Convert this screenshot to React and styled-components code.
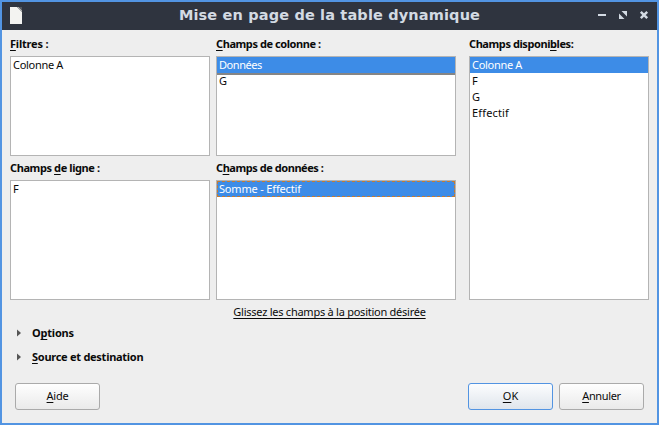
import React from "react";
import styled, { createGlobalStyle } from "styled-components";

const GlobalStyle = createGlobalStyle`
  *, *::before, *::after { box-sizing: border-box; }
  body { margin: 0; background: #eeeeee; }
`;

const Window = styled.div`
  width: 659px;
  height: 425px;
  border: 2px solid #5294e2;
  background: #eeeeee;
  color: #0a0a0a;
  font: 11px/16px "Noto Sans", "Open Sans", sans-serif;
  display: flex;
  flex-direction: column;
  overflow: hidden;
  white-space: nowrap;
`;

const TitleBar = styled.header`
  height: 28px;
  flex: none;
  display: grid;
  grid-template-columns: 60px 1fr 60px;
  align-items: center;
  background: #2f343f;
  color: #d3dae3;
`;

const DocumentIcon = styled.svg`
  display: block;
  margin-left: 7px;
`;

const Title = styled.h1`
  margin: 0;
  padding-bottom: 1px;
  text-align: center;
  font: bold 14.5px/25px "DejaVu Sans", sans-serif;
  letter-spacing: 0.15px;
`;

const WindowControls = styled.svg`
  display: block;
`;

const Fields = styled.main`
  display: grid;
  grid-template-columns: 200px 240px 180px;
  grid-template-rows: 126px 144px;
  column-gap: 6px;
  padding-left: 8px;
`;

const Field = styled.section`
  display: flex;
  flex-direction: column;
  ${(p) => p.$tall && "grid-column: 3; grid-row: 1 / 3; margin-left: 7px; width: 180px;"}
`;

const Label = styled.label`
  height: ${(p) => (p.$lower ? 24 : 26)}px;
  padding-top: ${(p) => (p.$lower ? 4 : 6)}px;
  font-weight: bold;
`;

const Text = styled.span`
  letter-spacing: ${(p) => p.$spacing || 0}px;
`;

const Key = styled.u`
  text-decoration: underline 1px;
  text-underline-offset: 2px;
  text-decoration-skip-ink: none;
`;

const List = styled.ul`
  flex: 1;
  margin: 0;
  padding: 0;
  list-style: none;
  border: 1px solid #b4b4b4;
  background: #fff;
`;

const Row = styled.li`
  height: 16px;
  padding-left: 2px;
  ${(p) => p.$selected && "background: #3d8ce7; color: #fff;"}
  ${(p) => p.$ruled && "height: 18px; border-bottom: 2px solid #858585; margin-bottom: -2px;"}
  ${(p) => p.$focused && "outline: 1px dashed #c47b32; outline-offset: -1px;"}
`;

const Hint = styled.p`
  margin: 4px 0 0;
  height: 17px;
  width: 655px;
  text-align: center;
`;

const HintText = styled(Text)`
  text-decoration: underline 1px;
  text-underline-offset: 2px;
  text-decoration-skip-ink: none;
`;

const Expander = styled.div`
  display: flex;
  align-items: center;
  height: 24px;
  padding-left: 15px;
  font-weight: bold;
`;

const Arrow = styled.svg`
  width: 4px;
  height: 8px;
  margin-right: 11px;
`;

const Actions = styled.footer`
  display: flex;
  gap: 6px;
  padding: 14px 13px 0;
`;

const Button = styled.button`
  width: 85px;
  height: 27px;
  padding: 0 0 1px;
  border: 1px solid ${(p) => (p.$primary ? "#5294e2" : "#aaaaaa")};
  border-radius: 3px;
  background: linear-gradient(${(p) => (p.$primary ? "#fcfdfe, #dfe5ec" : "#fefefe, #eaeaea")});
  color: inherit;
  font: inherit;
  margin-right: ${(p) => (p.$leading ? "auto" : "0")};
`;

const expanders = [
  { id: "options", spacing: -0.2, label: <>O<Key>p</Key>tions</> },
  { id: "source", spacing: -0.27, label: <><Key>S</Key>ource et destination</> },
];

export default function App() {
  return (
    <>
      <GlobalStyle />
      <Window>
        <TitleBar>
          <DocumentIcon width="14" height="18" viewBox="0 0 14 18">
            <path d="M1 0h8l4 4v13H1z" fill="#f3f3f1" />
            <path d="M8 0h5v5z" fill="#55585e" />
            <path d="M9 0l4 4" stroke="#a9aaac" strokeWidth="1" />
          </DocumentIcon>
          <Title>Mise en page de la table dynamique</Title>
          <WindowControls width="60" height="28" viewBox="0 0 60 28">
            <path d="M1 12h8v2H1z" fill="#d3dae3" />
            <path d="M24.5 9H30v5.5zM22 11.5V17h5.5z" fill="#d3dae3" />
            <path d="M43.8 9.8l6.4 6.4m0-6.4l-6.4 6.4" stroke="#d3dae3" strokeWidth="2.4" />
          </WindowControls>
        </TitleBar>
        <Fields>
          <Field>
            <Label><Text $spacing={-0.2}><Key>F</Key>iltres :</Text></Label>
            <List><Row><Text $spacing={-0.3}>Colonne A</Text></Row></List>
          </Field>
          <Field>
            <Label><Text $spacing={-0.42}><Key>C</Key>hamps de colonne :</Text></Label>
            <List>
              <Row $selected $ruled><Text $spacing={-0.45}>Données</Text></Row>
              <Row>G</Row>
            </List>
          </Field>
          <Field $tall>
            <Label><Text $spacing={-0.42}>Champs disponi<Key>b</Key>les:</Text></Label>
            <List>
              <Row $selected><Text $spacing={-0.3}>Colonne A</Text></Row>
              <Row>F</Row>
              <Row>G</Row>
              <Row><Text $spacing={0.15}>Effectif</Text></Row>
            </List>
          </Field>
          <Field>
            <Label $lower><Text $spacing={-0.4}>Champs <Key>d</Key>e ligne :</Text></Label>
            <List><Row>F</Row></List>
          </Field>
          <Field>
            <Label $lower><Text $spacing={-0.45}>C<Key>h</Key>amps de données :</Text></Label>
            <List><Row $selected $focused><Text $spacing={-0.17}>Somme - Effectif</Text></Row></List>
          </Field>
        </Fields>
        <Hint><HintText $spacing={-0.25}>Glissez les champs à la position désirée</HintText></Hint>
        {expanders.map(({ id, spacing, label }) => (
          <Expander key={id}>
            <Arrow viewBox="0 0 4 8"><path d="M0 0.5l4 3.5-4 3.5z" fill="#555" /></Arrow>
            <Text $spacing={spacing}>{label}</Text>
          </Expander>
        ))}
        <Actions>
          <Button $leading><Text $spacing={-0.25}><Key>A</Key>ide</Text></Button>
          <Button $primary><Key>O</Key>K</Button>
          <Button><Text $spacing={-0.35}><Key>A</Key>nnuler</Text></Button>
        </Actions>
      </Window>
    </>
  );
}
